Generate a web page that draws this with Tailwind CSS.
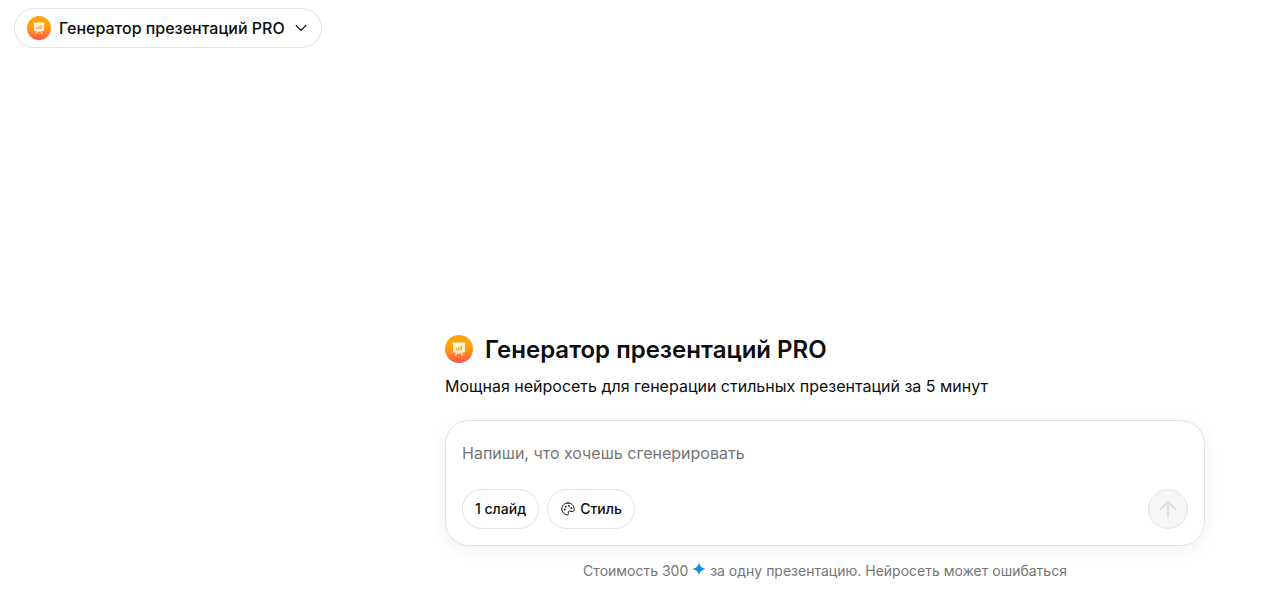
<!DOCTYPE html>
<html lang="ru">
    <head>
        <meta charset="UTF-8">
        <meta name="viewport" content="width=device-width, initial-scale=1">
        <title>Генератор презентаций PRO</title>
        <script src="https://cdn.jsdelivr.net/npm/@tailwindcss/browser@4"></script>
    </head>
    <body class="flex min-h-screen flex-col bg-white font-['Inter','Liberation_Sans',sans-serif] text-[#0d0d0d]">
        <!-- Shared logo, zero-sized rather than hidden so the gradient still paints -->
        <svg class="absolute size-0" aria-hidden="true">
            <defs>
                <linearGradient id="logo_bg" x1="0" y1="0" x2="0" y2="1">
                    <stop offset="0.4" stop-color="#ffa408"/>
                    <stop offset="0.7" stop-color="#ff8428"/>
                    <stop offset="1" stop-color="#ff4a58"/>
                </linearGradient>
            </defs>
            <symbol id="logo" viewBox="0 0 28 28">
                <circle cx="14" cy="14" r="14" fill="url(#logo_bg)"/>
                <path d="M7.5 7.500h13v1.500h-.6v7.500c0 .6-.4 1-1 1h-2.300l1.400 2.600-1.100.6-1.700-3.200h-.6v1.500h-1.200v-1.500h-.6l-1.700 3.200-1.100-.6 1.400-2.600H9.100c-.6 0-1-.4-1-1V9h-.6z" fill="#fff5dc"/>
                <path d="M10.800 13h1.600v2.500h-1.600zM13.200 12h1.600v3.500h-1.600zM15.600 10.500h1.600v5h-1.600z" fill="#ffa928"/>
            </symbol>
        </svg>

        <header class="px-3.5 pt-2">
            <button type="button" class="flex h-10 items-center rounded-full border border-[#e2e2e2] px-3 text-base font-medium">
                <svg class="mr-2 size-6"><use href="#logo"/></svg>
                Генератор презентаций PRO
                <svg class="ml-2 size-4" viewBox="0 0 16 16" fill="none" stroke="currentColor" stroke-width="1.2" stroke-linecap="round" stroke-linejoin="round"><path d="M3.200 5.500 8 10.300l4.800-4.800"/></svg>
            </button>
        </header>

        <main class="mt-auto pr-20 pb-[11px] pl-[445px]">
            <div class="mx-auto max-w-[760px]">
                <h1 class="flex items-start gap-3 text-2xl font-semibold">
                    <svg class="mt-px size-7 shrink-0"><use href="#logo"/></svg>
                    Генератор презентаций PRO
                </h1>
                <p class="mt-2 text-base">Мощная нейросеть для генерации стильных презентаций за 5 минут</p>

                <form class="mt-[22px] rounded-3xl border border-[#e2e2e2] p-4 shadow-[0_4px_16px_rgba(0,0,0,0.06)]">
                    <input type="text" aria-label="Запрос" placeholder="Напиши, что хочешь сгенерировать" class="block h-8 w-full text-base outline-none placeholder:text-[#757575]">
                    <div class="mt-5 flex items-center gap-2 text-sm font-medium">
                        <button type="button" class="h-10 rounded-full border border-[#e2e2e2] px-3">1 слайд</button>
                        <button type="button" class="flex h-10 items-center gap-1 rounded-full border border-[#e2e2e2] px-3">
                            <svg class="size-4" viewBox="0 0 16 16" fill="none" stroke="currentColor" stroke-linecap="round" stroke-linejoin="round">
                                <path d="M8 2C4.500 2 1.800 4.700 1.800 8c0 3 2.200 5.400 5 5.900 1 .2 1.700-.4 1.600-1.400l-.1-.9c-.1-1 .6-1.700 1.600-1.500l2.200.4c1.200.2 2.100-.7 2.100-2C14.200 4.700 11.500 2 8 2z"/>
                                <g fill="currentColor" stroke="none">
                                    <circle cx="4.800" cy="8.400" r=".9"/>
                                    <circle cx="5.800" cy="5.600" r=".9"/>
                                    <circle cx="9" cy="4.900" r=".9"/>
                                    <circle cx="11.300" cy="7" r=".9"/>
                                </g>
                            </svg>
                            Стиль
                        </button>
                        <button type="submit" disabled aria-label="Отправить" class="ml-auto flex size-10 items-center justify-center rounded-full border border-[#e6e6e6] bg-[#f6f6f6] text-[#e2e2e2]">
                            <svg class="size-5" viewBox="0 0 20 20" fill="none" stroke="currentColor" stroke-width="1.800" stroke-linecap="round" stroke-linejoin="round"><path d="M10 17.500V2.800M2.800 10 10 2.800l7.200 7.200"/></svg>
                        </button>
                    </div>
                </form>

                <p class="mt-[15px] text-center text-sm text-[#757575]">
                    Стоимость 300
                    <svg class="inline-block size-3.5 align-baseline" viewBox="0 0 14 14"><path d="M7 .3c.8 4 2.200 5.700 6.700 6.700-4.500 1-5.900 2.700-6.700 6.700C6.200 9.700 4.800 8 .3 7 4.800 6 6.200 4.300 7 .3z" fill="#0a8dea"/></svg>
                    за одну презентацию. Нейросеть может ошибаться
                </p>
            </div>
        </main>
    </body>
</html>
